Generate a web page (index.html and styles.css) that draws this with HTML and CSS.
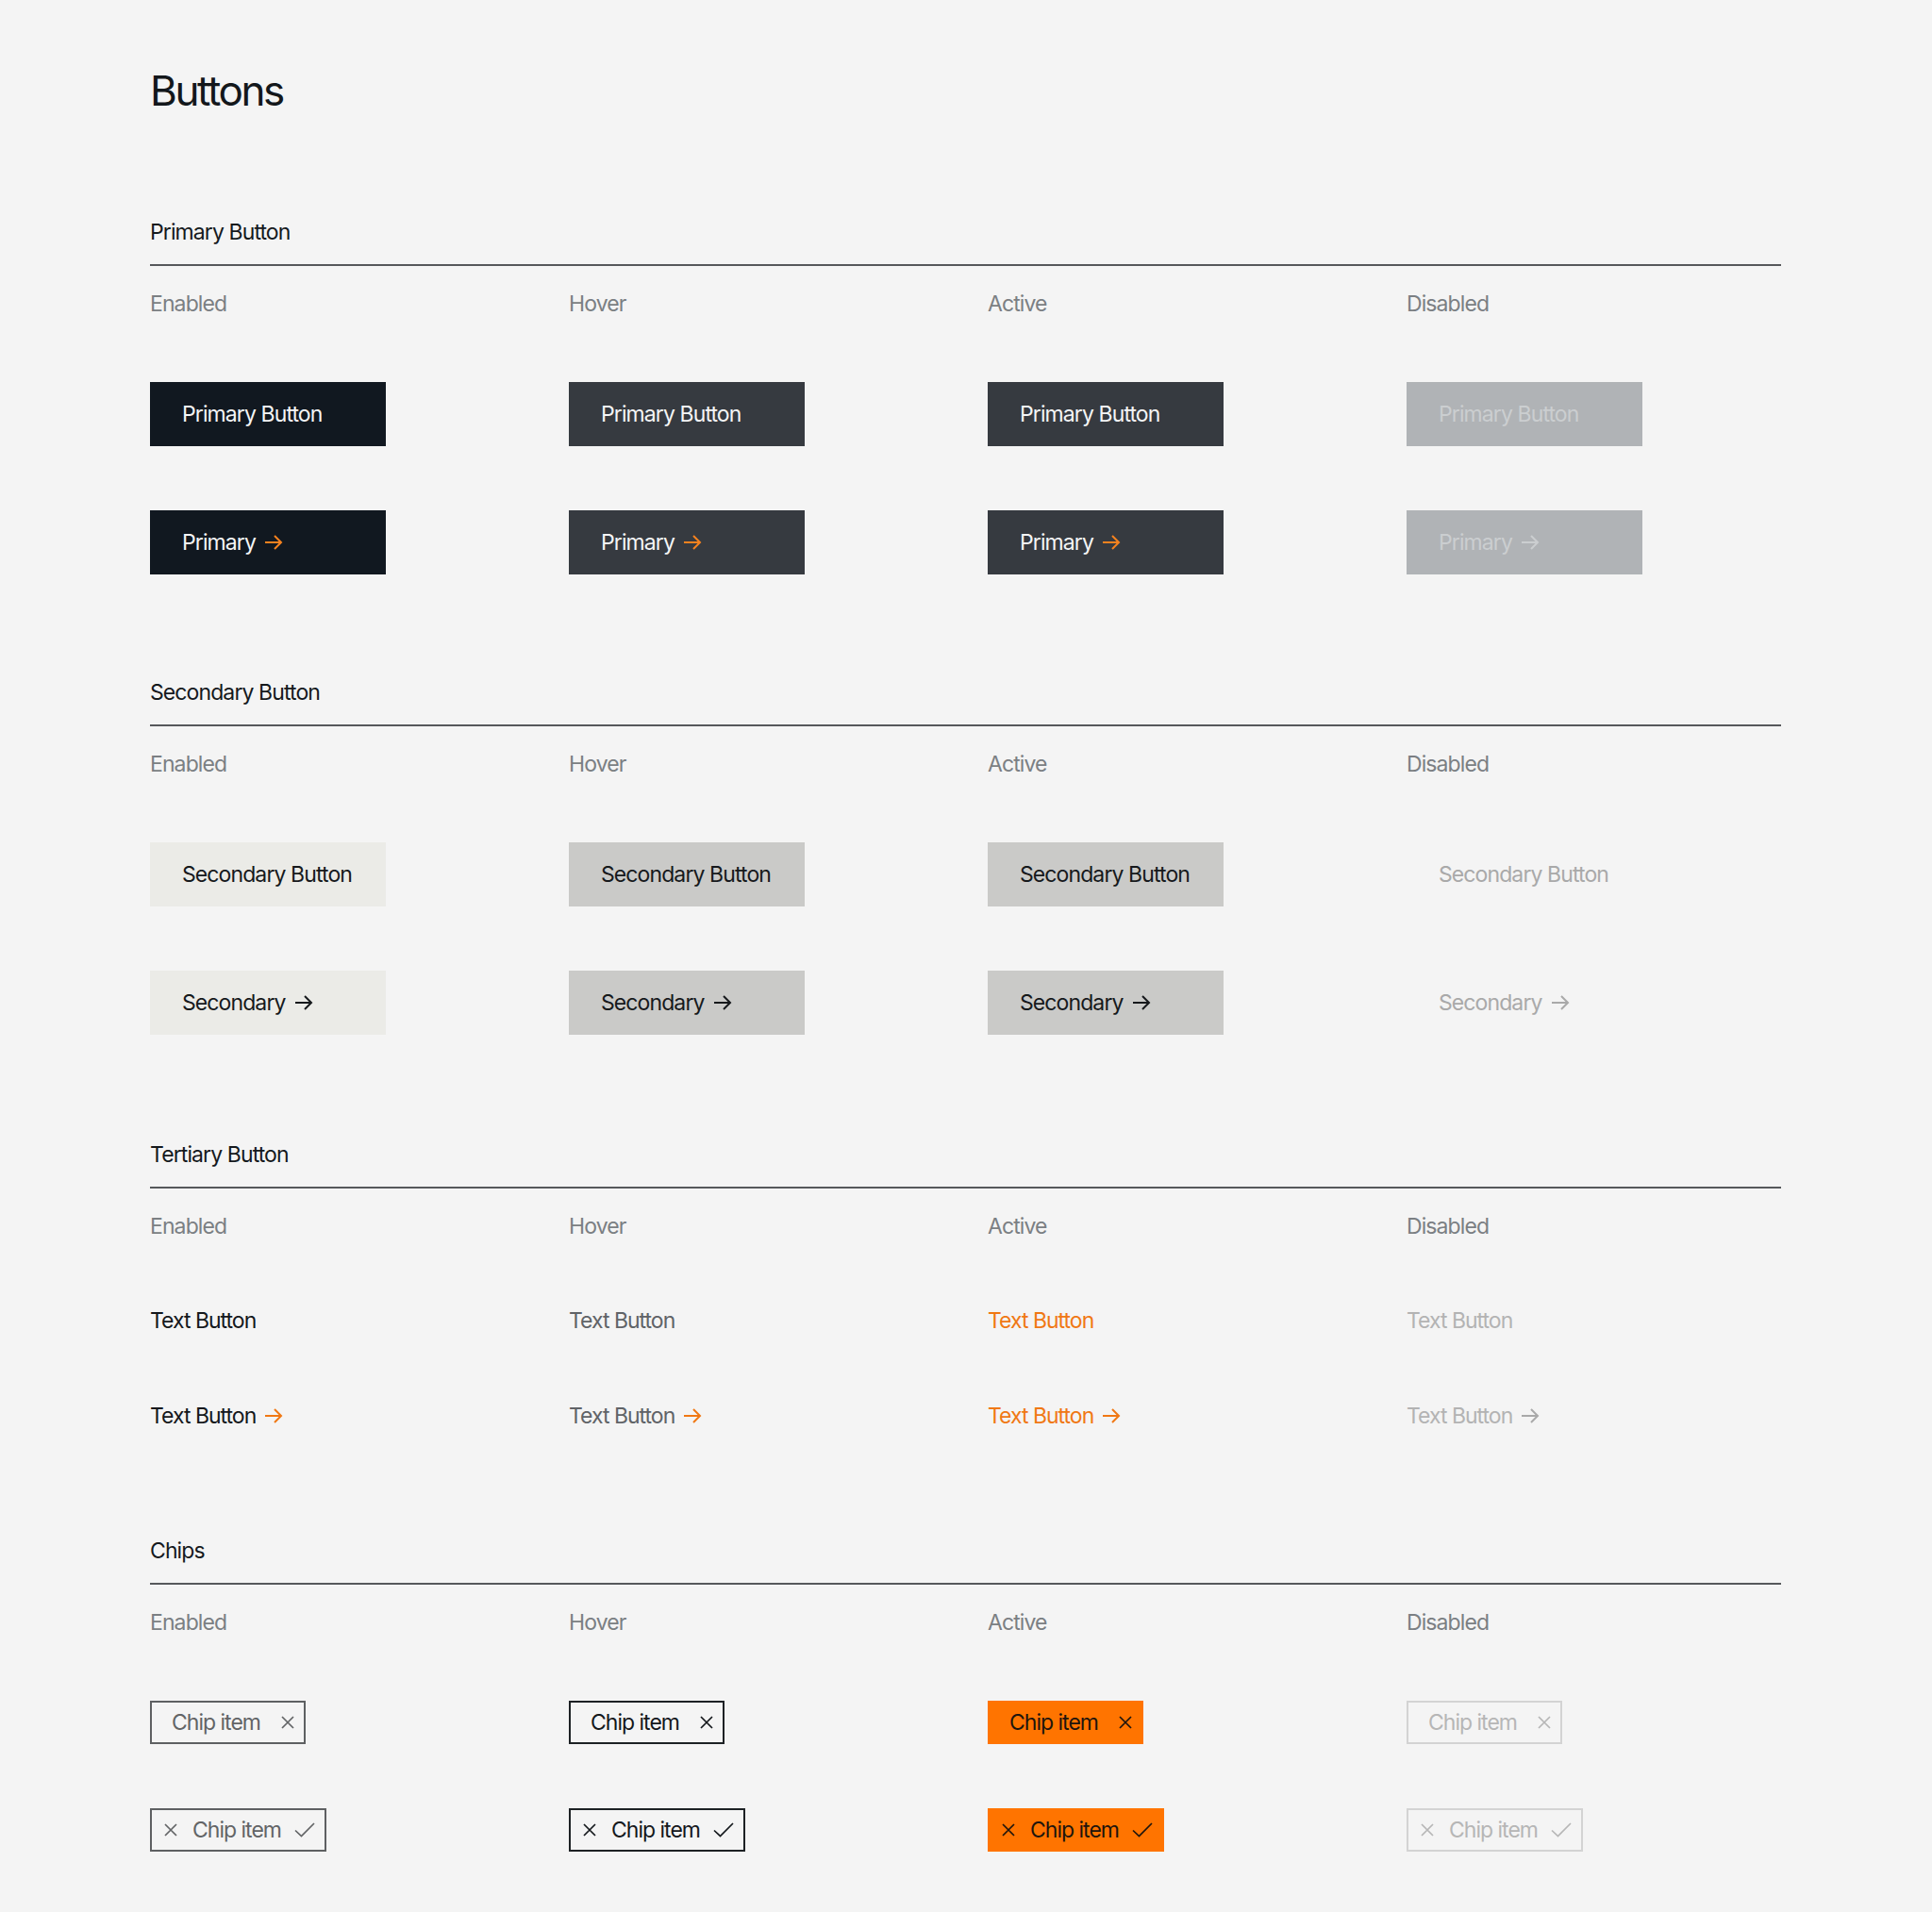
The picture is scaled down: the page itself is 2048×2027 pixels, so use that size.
FILE: index.html
```html
<!DOCTYPE html>
<html lang="en">
<head>
<meta charset="utf-8">
<title>Buttons</title>
<link rel="stylesheet" href="styles.css">
</head>
<body>
<main class="page">
  <h1 class="title">Buttons</h1>

  <section class="group">
    <h2 class="group-title">Primary Button</h2>
    <div class="grid">
      <div class="state">Enabled</div>
      <div class="state">Hover</div>
      <div class="state">Active</div>
      <div class="state">Disabled</div>

      <button class="btn primary">Primary Button</button>
      <button class="btn primary is-hover">Primary Button</button>
      <button class="btn primary is-active">Primary Button</button>
      <button class="btn primary is-disabled">Primary Button</button>

      <button class="btn primary">Primary<svg class="arrow" viewBox="0 0 24 24"><path d="M3 12h17M13 5l7 7-7 7"/></svg></button>
      <button class="btn primary is-hover">Primary<svg class="arrow" viewBox="0 0 24 24"><path d="M3 12h17M13 5l7 7-7 7"/></svg></button>
      <button class="btn primary is-active">Primary<svg class="arrow" viewBox="0 0 24 24"><path d="M3 12h17M13 5l7 7-7 7"/></svg></button>
      <button class="btn primary is-disabled">Primary<svg class="arrow" viewBox="0 0 24 24"><path d="M3 12h17M13 5l7 7-7 7"/></svg></button>
    </div>
  </section>

  <section class="group">
    <h2 class="group-title">Secondary Button</h2>
    <div class="grid">
      <div class="state">Enabled</div>
      <div class="state">Hover</div>
      <div class="state">Active</div>
      <div class="state">Disabled</div>

      <button class="btn secondary">Secondary Button</button>
      <button class="btn secondary is-hover">Secondary Button</button>
      <button class="btn secondary is-active">Secondary Button</button>
      <button class="btn secondary is-disabled">Secondary Button</button>

      <button class="btn secondary">Secondary<svg class="arrow" viewBox="0 0 24 24"><path d="M3 12h17M13 5l7 7-7 7"/></svg></button>
      <button class="btn secondary is-hover">Secondary<svg class="arrow" viewBox="0 0 24 24"><path d="M3 12h17M13 5l7 7-7 7"/></svg></button>
      <button class="btn secondary is-active">Secondary<svg class="arrow" viewBox="0 0 24 24"><path d="M3 12h17M13 5l7 7-7 7"/></svg></button>
      <button class="btn secondary is-disabled">Secondary<svg class="arrow" viewBox="0 0 24 24"><path d="M3 12h17M13 5l7 7-7 7"/></svg></button>
    </div>
  </section>

  <section class="group group-wide">
    <h2 class="group-title">Tertiary Button</h2>
    <div class="grid">
      <div class="state">Enabled</div>
      <div class="state">Hover</div>
      <div class="state">Active</div>
      <div class="state">Disabled</div>

      <button class="tbtn">Text Button</button>
      <button class="tbtn is-hover">Text Button</button>
      <button class="tbtn is-active">Text Button</button>
      <button class="tbtn is-disabled">Text Button</button>

      <button class="tbtn">Text Button<svg class="arrow" viewBox="0 0 24 24"><path d="M3 12h17M13 5l7 7-7 7"/></svg></button>
      <button class="tbtn is-hover">Text Button<svg class="arrow" viewBox="0 0 24 24"><path d="M3 12h17M13 5l7 7-7 7"/></svg></button>
      <button class="tbtn is-active">Text Button<svg class="arrow" viewBox="0 0 24 24"><path d="M3 12h17M13 5l7 7-7 7"/></svg></button>
      <button class="tbtn is-disabled">Text Button<svg class="arrow" viewBox="0 0 24 24"><path d="M3 12h17M13 5l7 7-7 7"/></svg></button>
    </div>
  </section>

  <section class="group group-wide">
    <h2 class="group-title">Chips</h2>
    <div class="grid">
      <div class="state">Enabled</div>
      <div class="state">Hover</div>
      <div class="state">Active</div>
      <div class="state">Disabled</div>

      <span class="chip chip-close">Chip item<svg class="x" viewBox="0 0 14 14"><path d="M1 1l12 12M13 1L1 13"/></svg></span>
      <span class="chip chip-close is-hover">Chip item<svg class="x" viewBox="0 0 14 14"><path d="M1 1l12 12M13 1L1 13"/></svg></span>
      <span class="chip chip-close is-active">Chip item<svg class="x" viewBox="0 0 14 14"><path d="M1 1l12 12M13 1L1 13"/></svg></span>
      <span class="chip chip-close is-disabled">Chip item<svg class="x" viewBox="0 0 14 14"><path d="M1 1l12 12M13 1L1 13"/></svg></span>

      <span class="chip chip-check"><svg class="x" viewBox="0 0 14 14"><path d="M1 1l12 12M13 1L1 13"/></svg>Chip item<svg class="check" viewBox="0 0 22 16"><path d="M1 8.5l6.5 6L21 1"/></svg></span>
      <span class="chip chip-check is-hover"><svg class="x" viewBox="0 0 14 14"><path d="M1 1l12 12M13 1L1 13"/></svg>Chip item<svg class="check" viewBox="0 0 22 16"><path d="M1 8.5l6.5 6L21 1"/></svg></span>
      <span class="chip chip-check is-active"><svg class="x" viewBox="0 0 14 14"><path d="M1 1l12 12M13 1L1 13"/></svg>Chip item<svg class="check" viewBox="0 0 22 16"><path d="M1 8.5l6.5 6L21 1"/></svg></span>
      <span class="chip chip-check is-disabled"><svg class="x" viewBox="0 0 14 14"><path d="M1 1l12 12M13 1L1 13"/></svg>Chip item<svg class="check" viewBox="0 0 22 16"><path d="M1 8.5l6.5 6L21 1"/></svg></span>
    </div>
  </section>
</main>
</body>
</html>
```

FILE: styles.css
```css
* { box-sizing: border-box; }

body {
  margin: 0;
  background: #f4f4f4;
  font-family: Inter, "Liberation Sans", "DejaVu Sans", sans-serif;
  color: #13171b;
}

.page {
  padding: 72px 0 64px 159px;
}

.title {
  margin: 0 0 112px;
  font-size: 44px;
  line-height: 48px;
  font-weight: 400;
  letter-spacing: -2.4px;
  color: #13171b;
}

.group + .group { margin-top: 111px; }
.group + .group-wide { margin-top: 113px; }

.group-title {
  margin: 0;
  width: 1729px;
  font-size: 23px;
  line-height: 28px;
  font-weight: 400;
  letter-spacing: -0.9px;
  padding-bottom: 20px;
  border-bottom: 2px solid #56585b;
  color: #15191d;
}

.grid {
  display: grid;
  grid-template-columns: repeat(4, 444px);
  row-gap: 68px;
  margin-top: 25px;
  align-items: center;
  justify-items: start;
}

.state {
  font-size: 23px;
  line-height: 30px;
  letter-spacing: -0.9px;
  color: #7b7f83;
}

button {
  font: inherit;
  border: 0;
  margin: 0;
  background: none;
  cursor: pointer;
}

.arrow {
  width: 24px;
  height: 24px;
  margin-left: 5px;
  flex: none;
}
.arrow path {
  fill: none;
  stroke: currentColor;
  stroke-width: 2;
}

/* Filled buttons */
.btn {
  display: flex;
  align-items: center;
  width: 250px;
  height: 68px;
  padding: 0 0 1px 34px;
  font-size: 23px;
  letter-spacing: -0.9px;
  text-align: left;
}

.primary { background: #111820; color: #f4f5f6; }
.primary .arrow { color: #f5821f; margin-left: 7px; }
.primary.is-hover,
.primary.is-active { background: #363a40; }
.primary.is-disabled { background: #b0b3b6; color: #cbced0; }
.primary.is-disabled .arrow { color: #cbced0; }

.secondary { background: #ebebe7; color: #16191c; }
.secondary .arrow { margin-left: 7px; }
.secondary.is-hover,
.secondary.is-active { background: #cacac8; }
.secondary.is-disabled { background: transparent; color: #a9a9a9; }

/* Text buttons */
.tbtn {
  display: flex;
  align-items: center;
  height: 33px;
  padding: 0;
  font-size: 23px;
  letter-spacing: -1px;
  color: #14181c;
}
.tbtn .arrow { color: #f07814; margin-left: 7px; }
.tbtn.is-hover { color: #606367; }
.tbtn.is-active { color: #f07814; }
.tbtn.is-disabled { color: #b3b3b3; }
.tbtn.is-disabled .arrow { color: #a9a9a9; }

/* Chips */
.chip {
  display: flex;
  align-items: center;
  height: 46px;
  border: 2px solid #5e6062;
  font-size: 23px;
  letter-spacing: -1px;
  color: #626466;
}
.chip svg { flex: none; }
.chip svg path {
  fill: none;
  stroke: currentColor;
  stroke-width: 1.7;
}
.x { width: 14px; height: 14px; }
.check { width: 22px; height: 16px; }

.chip-close { padding: 0 10px 0 21px; }
.chip-close .x { margin-left: 22px; }

.chip-check { padding: 0 10px 0 13px; }
.chip-check .x { margin-right: 16px; }
.chip-check .check { margin-left: 14px; }

.chip.is-hover { border-color: #1d2124; color: #14181c; }
.chip.is-active { background: #ff7400; border-color: #ff7400; color: #1e150d; }
.chip.is-disabled { border-color: #d3d3d3; color: #b6b6b6; }
```
